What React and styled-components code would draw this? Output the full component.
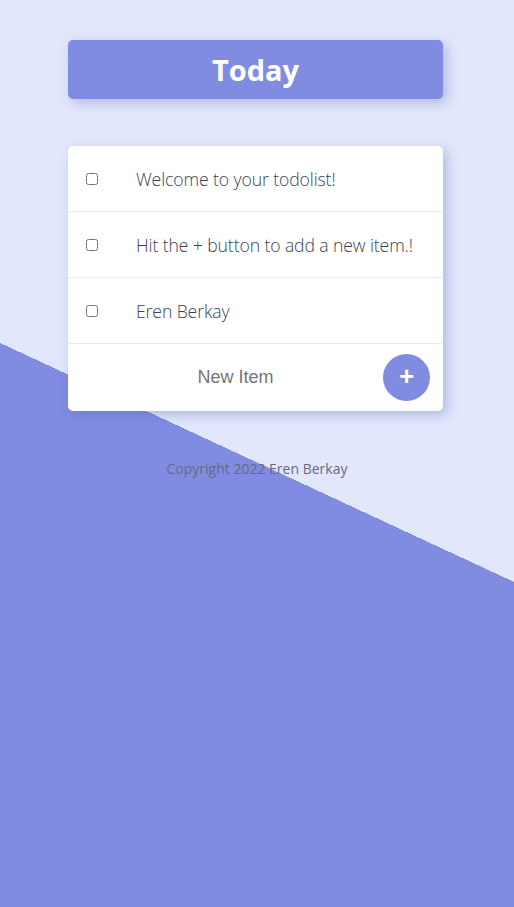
import React, { useState } from 'react';
import styled, { createGlobalStyle } from 'styled-components';

const GlobalStyle = createGlobalStyle`
    html, body {
        margin: 0;
        height: 100%;
    }
    body {
        font-family: "Open Sans", "Noto Sans", sans-serif;
        background: linear-gradient(204.94deg, #e2e7fc 527.7px, #7f8ce1 527.7px);
        background-attachment: fixed;
    }
`;

const Page = styled.div`
    display: flex;
    flex-direction: column;
    align-items: flex-start;
    padding: 40px 0 0 68px;
`;

const Heading = styled.div`
    width: 375px;
    height: 59px;
    display: flex;
    align-items: center;
    justify-content: center;
    background: #7f8ce1;
    border-radius: 5px;
    box-shadow: 4px 4px 12px rgba(90, 100, 170, 0.35);

    h1 {
        margin: 0;
        color: #fff;
        font-size: 29px;
        font-weight: 700;
    }
`;

const Card = styled.div`
    width: 375px;
    margin-top: 47px;
    background: #fff;
    border-radius: 5px;
    box-shadow: 4px 4px 12px rgba(90, 100, 170, 0.35);
`;

const Row = styled.div`
    height: 65px;
    display: flex;
    align-items: center;
    border-bottom: 1px solid #ececf0;

    input {
        margin: 0 0 0 18px;
        width: 12px;
        height: 12px;
    }

    p {
        margin: 0 0 0 38px;
        font-size: 17.6px;
        letter-spacing: -0.1px;
        font-weight: 300;
        color: #3a3f55;
    }
`;

const NewItemForm = styled.form`
    height: 67px;
    display: flex;
    align-items: center;
    padding-right: 13px;
`;

const NewItemInput = styled.input`
    flex: 1;
    min-width: 0;
    border: none;
    outline: none;
    text-align: center;
    font-family: "Liberation Sans", Arial, sans-serif;
    font-size: 18px;
    padding: 0 0 0 20px;
    color: #333;
    background: transparent;

    &::placeholder {
        color: #757575;
    }
`;

const AddButton = styled.button`
    flex-shrink: 0;
    width: 47px;
    height: 47px;
    border-radius: 50%;
    border: none;
    background: #7f8ce1;
    color: #fff;
    font-family: "Liberation Sans", Arial, sans-serif;
    font-size: 26px;
    font-weight: 700;
    display: flex;
    align-items: center;
    justify-content: center;
    padding: 0 0 3px;
    cursor: pointer;
`;

const Footer = styled.footer`
    align-self: center;
    margin: 48px 0 0 -68px;
    font-size: 14px;
    color: #656a80;
`;

export default function App() {
    const [items, setItems] = useState([
        'Welcome to your todolist!',
        'Hit the + button to add a new item.!',
        'Eren Berkay',
    ]);
    const [text, setText] = useState('');

    const onSubmit = (e) => {
        e.preventDefault();
        if (!text) return;
        setItems([...items, text]);
        setText('');
    };

    return (
        <>
            <GlobalStyle />
            <Page>
                <Heading>
                    <h1>Today</h1>
                </Heading>
                <Card>
                    {items.map((item, i) => (
                        <Row key={i}>
                            <input type="checkbox" />
                            <p>{item}</p>
                        </Row>
                    ))}
                    <NewItemForm onSubmit={onSubmit}>
                        <NewItemInput
                            placeholder="New Item"
                            value={text}
                            onChange={(e) => setText(e.target.value)}
                        />
                        <AddButton type="submit">+</AddButton>
                    </NewItemForm>
                </Card>
                <Footer>Copyright 2022 Eren Berkay</Footer>
            </Page>
        </>
    );
}
